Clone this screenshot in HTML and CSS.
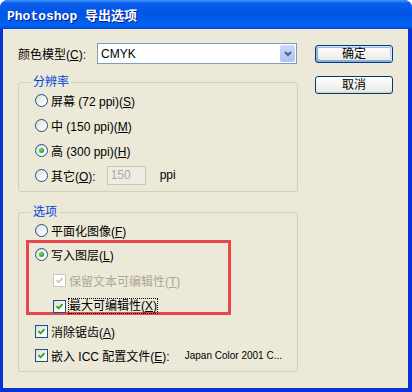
FILE: index.html
```html
<!DOCTYPE html>
<html>
<head>
  <meta charset="UTF-8">
  <title>Photoshop 导出选项</title>
  <link rel="stylesheet" href="styles.css">
</head>
<body>
  <div class="window">
    <div class="title-bar">
      <span class="title">Photoshop 导出选项</span>
    </div>
    <div class="window-body">
      <div class="main">
        <div class="model-row">
          <label class="model-label">颜色模型(<u>C</u>):</label>
          <div class="select">
            <span class="select-value">CMYK</span>
            <span class="select-btn">
              <svg width="8" height="6" viewBox="0 0 8 6"><polyline points="1,1 4,4 7,1" fill="none" stroke="#4D6185" stroke-width="2"/></svg>
            </span>
          </div>
        </div>

        <fieldset class="group">
          <legend>分辨率</legend>
          <div class="options">
            <div class="opt"><span class="radio"></span><span>屏幕 (72 ppi)(<u>S</u>)</span></div>
            <div class="opt"><span class="radio"></span><span>中 (150 ppi)(<u>M</u>)</span></div>
            <div class="opt"><span class="radio checked"></span><span>高 (300 ppi)(<u>H</u>)</span></div>
            <div class="opt">
              <span class="radio"></span><span>其它(<u>O</u>):</span>
              <input class="num" type="text" value="150" disabled>
              <span class="unit">ppi</span>
            </div>
          </div>
        </fieldset>

        <fieldset class="group group-options">
          <legend>选项</legend>
          <div class="options options-flat">
            <div class="opt"><span class="radio"></span><span>平面化图像(<u>F</u>)</span></div>
            <div class="mark">
              <div class="opt first"><span class="radio checked"></span><span>写入图层(<u>L</u>)</span></div>
              <div class="opt indent spaced disabled">
                <span class="check disabled">
                  <svg width="7" height="7" viewBox="0 0 7 7"><polyline points="0.5,3.2 2.6,5.3 6.5,1.2" fill="none" stroke-width="1.8"/></svg>
                </span><span>保留文本可编辑性(<u>T</u>)</span>
              </div>
              <div class="opt indent spaced">
                <span class="check">
                  <svg width="7" height="7" viewBox="0 0 7 7"><polyline points="0.5,3.2 2.6,5.3 6.5,1.2" fill="none" stroke-width="1.8"/></svg>
                </span><span class="focus">最大可编辑性(<u>X</u>)</span>
              </div>
            </div>
            <div class="opt after-mark">
              <span class="check">
                <svg width="7" height="7" viewBox="0 0 7 7"><polyline points="0.5,3.2 2.6,5.3 6.5,1.2" fill="none" stroke-width="1.8"/></svg>
              </span><span>消除锯齿(<u>A</u>)</span>
            </div>
            <div class="opt last">
              <span class="check">
                <svg width="7" height="7" viewBox="0 0 7 7"><polyline points="0.5,3.2 2.6,5.3 6.5,1.2" fill="none" stroke-width="1.8"/></svg>
              </span><span>嵌入 ICC 配置文件(<u>E</u>):</span>
              <span class="profile">Japan Color 2001 C...</span>
            </div>
          </div>
        </fieldset>
      </div>

      <div class="actions">
        <button class="btn default">确定</button>
        <button class="btn">取消</button>
      </div>
    </div>
  </div>
</body>
</html>
```

FILE: styles.css
```css
body {
  margin: 0;
  font-family: "Liberation Sans", "Noto Sans CJK SC", sans-serif;
  font-size: 12px;
  color: #000;
  background: #fff;
}

.window {
  width: 412px;
  height: 392px;
  display: flex;
  flex-direction: column;
  background: #0831D9;
  border-radius: 8px 8px 0 0;
  overflow: hidden;
}

.title-bar {
  flex: none;
  height: 29px;
  display: flex;
  align-items: center;
  padding-left: 7px;
  background: linear-gradient(180deg, #3D95FF 0%, #0A5EEA 12%, #0055E5 45%, #0062F2 85%, #0059E8 94%, #0040D0 100%);
}

.title {
  font-family: "Liberation Mono", "Noto Sans CJK SC", monospace;
  font-weight: bold;
  font-size: 13px;
  color: #fff;
  text-shadow: 1px 1px 0 #0A1B8C;
}

.window-body {
  flex: 1;
  margin: 0 4px 4px 3px;
  padding: 14px 0 0 15px;
  background: #ECE9D8;
  display: flex;
  gap: 17px;
}

.main {
  width: 280px;
  display: flex;
  flex-direction: column;
}

.model-row {
  display: flex;
  align-items: center;
  height: 21px;
}

.model-label { width: 79px; }

.select {
  width: 200px;
  height: 21px;
  box-sizing: border-box;
  border: 1px solid #7F9DB9;
  background: #fff;
  display: flex;
  align-items: center;
}

.select-value {
  flex: 1;
  padding-left: 3px;
}

.select-btn {
  width: 15px;
  height: 17px;
  margin-right: 1px;
  border-radius: 2px;
  background: linear-gradient(180deg, #CCDAFB 0%, #B7CBF9 60%, #AFC4F6 100%);
  display: flex;
  align-items: center;
  justify-content: center;
}

.group {
  margin: 10px 0 0;
  padding: 0 12px 6px;
  border: 1px solid #D0D0BF;
  border-radius: 3px;
  min-width: 0;
}

.group legend {
  padding: 0 2px;
  line-height: 16px;
  color: #0046D5;
}

.group-options { margin-top: 12px; }

.options {
  display: flex;
  flex-direction: column;
  gap: 5px;
  margin-left: 4px;
}

.options-flat { gap: 0; }

.opt {
  display: flex;
  align-items: center;
  height: 20px;
  gap: 3px;
  white-space: nowrap;
}

.opt.disabled { color: #ACA899; }

.radio {
  flex: none;
  width: 13px;
  height: 13px;
  box-sizing: border-box;
  border: 1px solid #1C5180;
  border-radius: 50%;
  background: linear-gradient(135deg, #DCDCD7 0%, #fff 85%);
  display: flex;
  align-items: center;
  justify-content: center;
}

.radio.checked::after {
  content: "";
  width: 5px;
  height: 5px;
  border-radius: 50%;
  background: radial-gradient(circle at 35% 35%, #5DD85A, #1A9216);
}

.check {
  flex: none;
  width: 13px;
  height: 13px;
  box-sizing: border-box;
  border: 1px solid #1C5180;
  background: linear-gradient(135deg, #DCDCD7 0%, #fff 85%);
  display: flex;
  align-items: center;
  justify-content: center;
}

.check svg { stroke: #21A121; }

.check.disabled {
  border-color: #CAC8BB;
  background: #fff;
}

.check.disabled svg { stroke: #CAC8BB; }

.num {
  width: 39px;
  height: 19px;
  box-sizing: border-box;
  margin-left: 8px;
  padding: 0 0 0 3px;
  border: 1px solid #C9C7BA;
  background: #EFEDE3;
  color: #ACA899;
  font: inherit;
}

.unit { margin-left: 11px; }

.mark {
  width: 205px;
  height: 75px;
  box-sizing: border-box;
  margin-left: -9px;
  padding-left: 6px;
  border: 3px solid #E6474B;
  display: flex;
  flex-direction: column;
}

.mark .first { margin-top: 1px; flex: none; }
.mark .spaced { margin-top: 6px; flex: none; }
.indent { margin-left: 18px; }

.focus {
  outline: 1px dotted #000;
  line-height: 14px;
}

.after-mark { margin-top: 6px; }
.last { margin-top: 4px; }

.profile {
  margin-left: 12px;
  font-size: 10px;
}

.actions {
  width: 78px;
  padding-top: 2px;
  display: flex;
  flex-direction: column;
  gap: 13px;
}

.btn {
  height: 18px;
  box-sizing: border-box;
  padding: 0;
  border: 1px solid #003C74;
  border-radius: 3px;
  background: linear-gradient(180deg, #fff 0%, #ECEBE6 86%, #D6D0C5 100%);
  font: inherit;
  line-height: 16px;
  color: #000;
}

.btn.default {
  box-shadow: inset -1px 1px #CEE7FF, inset 1px 2px #98B8EA, inset -2px 2px #BCD4F6, inset 1px -1px #89ADE4, inset 2px -2px #89ADE4;
}
```
